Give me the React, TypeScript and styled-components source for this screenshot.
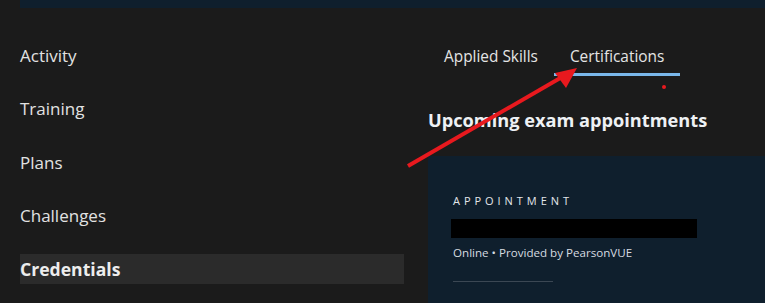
import React from "react";
import styled, { createGlobalStyle } from "styled-components";

const Global = createGlobalStyle`
  html, body { margin: 0; padding: 0; background: #1b1b1b; }
  body { font-family: "Open Sans", "Noto Sans", sans-serif; color: #e6e6e6; overflow: hidden; }
  * { box-sizing: border-box; }
`;

const Page = styled.div`
  position: relative;
  width: 765px;
  height: 303px;
  overflow: hidden;
  background: #1b1b1b;
`;

const TopBar = styled.div`
  margin-left: 20px;
  height: 8px;
  background: #0f1f2d;
`;

const Main = styled.div`
  display: grid;
  grid-template-columns: 384px 1fr;
  column-gap: 24px;
  padding-left: 20px;
`;

const Sidebar = styled.nav`
  display: flex;
  flex-direction: column;
  gap: 23.5px;
  padding-top: 32px;
`;

const NavItem = styled.div<{ $active?: boolean }>`
  height: 30px;
  display: flex;
  align-items: center;
  font-weight: ${(p) => (p.$active ? 700 : 400)};
  font-size: ${(p) => (p.$active ? "17.6px" : "17px")};
  color: ${(p) => (p.$active ? "#ededed" : "#e2e2e2")};
  background: ${(p) => (p.$active ? "#2b2b2b" : "transparent")};
`;

const Content = styled.section`
  display: flex;
  flex-direction: column;
`;

const Tabs = styled.div`
  display: flex;
  padding-top: 32px;
`;

const Tab = styled.div<{ $active?: boolean }>`
  padding: 0 16px;
  height: 36px;
  display: flex;
  align-items: center;
  font-size: 15.4px;
  color: #e4e4e4;
  border-bottom: 3px solid ${(p) => (p.$active ? "#7ab7ea" : "transparent")};
`;

const Heading = styled.h2`
  margin: 0;
  margin-top: 31px;
  font-size: 18.2px;
  font-weight: 700;
  color: #eef1f4;
  line-height: 26px;
`;

const Card = styled.div`
  margin-top: 23px;
  background: #0f1f2d;
  height: 200px;
  padding: 38px 25px 0 25px;
  display: flex;
  flex-direction: column;
`;

const Eyebrow = styled.div`
  font-size: 11px;
  letter-spacing: 3.95px;
  color: #e3e6ea;
  line-height: 14px;
`;

const Redacted = styled.div`
  margin-top: 11px;
  margin-left: -2px;
  width: 246px;
  height: 19px;
  background: #000;
`;

const Meta = styled.div`
  margin-top: 7px;
  font-size: 11.6px;
  color: #d6dbe0;
  line-height: 16px;
`;

const Divider = styled.hr`
  margin: 20px 0 0 0;
  width: 100px;
  border: none;
  border-top: 1px solid #3b4753;
`;

const NextLabel = styled.div`
  margin-top: 17px;
  margin-left: 36px;
  font-size: 11px;
  letter-spacing: 3px;
  color: #e3e6ea;
`;

const Overlay = styled.svg`
  position: absolute;
  left: 0;
  top: 0;
  pointer-events: none;
`;

export default function App() {
  return (
    <Page>
      <Global />
      <TopBar />
      <Main>
        <Sidebar>
          <NavItem>Activity</NavItem>
          <NavItem>Training</NavItem>
          <NavItem>Plans</NavItem>
          <NavItem>Challenges</NavItem>
          <NavItem $active>Credentials</NavItem>
        </Sidebar>
        <Content>
          <Tabs>
            <Tab>Applied Skills</Tab>
            <Tab $active>Certifications</Tab>
          </Tabs>
          <Heading>Upcoming exam appointments</Heading>
          <Card>
            <Eyebrow>APPOINTMENT</Eyebrow>
            <Redacted />
            <Meta>Online • Provided by PearsonVUE</Meta>
            <Divider />
            <NextLabel>T</NextLabel>
          </Card>
        </Content>
      </Main>
      <Overlay width="765" height="303" viewBox="0 0 765 303">
        <line x1="408" y1="166" x2="562" y2="77" stroke="#e8191e" strokeWidth="4" />
        <polygon points="577,68 555,73 566,88" fill="#e8191e" />
        <circle cx="664" cy="87" r="2" fill="#e8191e" />
      </Overlay>
    </Page>
  );
}
